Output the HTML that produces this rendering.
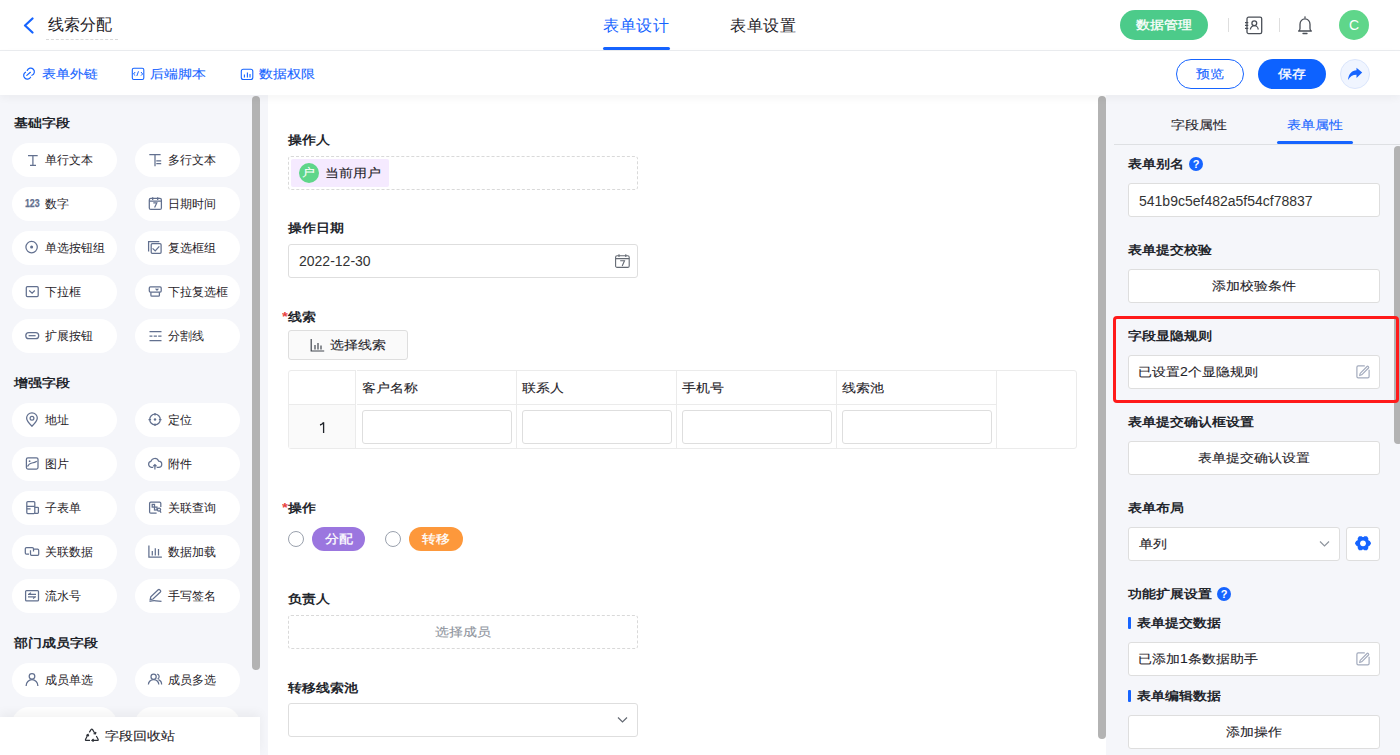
<!DOCTYPE html>
<html><head><meta charset="utf-8">
<style>
*{box-sizing:border-box;margin:0;padding:0}
html,body{width:1400px;height:755px;overflow:hidden;background:#fff;font-family:"Liberation Sans",sans-serif;color:#1f2329}
.a{position:absolute}
.t{position:absolute;white-space:nowrap;font-size:14px;line-height:14px;color:#1f2329}
.c{transform:scaleY(.86);-webkit-text-stroke:.12px}
.b{position:absolute;white-space:nowrap;font-size:14px;line-height:14px;font-weight:bold;color:#22252b;transform:scaleY(.86)}
.req{color:#e8413e;font-weight:bold;font-size:15px}
.sb{position:absolute;background:#b3b3b3;border-radius:4px}
.pill{position:absolute;width:105px;height:34px;border-radius:17px;background:#fff}
.pill svg{position:absolute;left:10px;top:5px}
.pill span{position:absolute;left:33px;top:11px;font-size:12px;line-height:12px;color:#1f2329;white-space:nowrap}
.box{position:absolute;background:#fff;border:1px solid #dedede;border-radius:3px}
.dash{position:absolute;border:1px dashed #d9d9d9;border-radius:3px}
.vl{position:absolute;width:1px;background:#ebebeb}
.hl{position:absolute;height:1px;background:#ebebeb}
.q{position:absolute;width:14px;height:14px;border-radius:50%;background:#1664ff;color:#fff;font-size:11px;line-height:14px;text-align:center;font-weight:bold}
</style></head><body>
<!-- header -->
<div class="a" style="left:0;top:0;width:1400px;height:50px;background:#fff"></div>
<div class="a" style="left:0;top:50px;width:1400px;height:1px;background:#ebedf0"></div>
<svg class="a" style="left:22px;top:17px" width="13" height="17" viewBox="0 0 13 17"><path d="M10.5 1.5 L3 8.5 L10.5 15.5" fill="none" stroke="#1664ff" stroke-width="2.2" stroke-linecap="round" stroke-linejoin="round"/></svg>
<div class="t" style="left:48px;top:17px;font-size:16px;line-height:16px">线索分配</div>
<div class="a" style="left:46px;top:39px;width:72px;height:0;border-top:1px dashed #d9d9d9"></div>
<div class="t" style="left:603px;top:18px;font-size:16px;line-height:16px;color:#1664ff;letter-spacing:.6px">表单设计</div>
<div class="a" style="left:603px;top:47px;width:67px;height:3px;background:#1664ff;border-radius:2px"></div>
<div class="t" style="left:730px;top:18px;font-size:16px;line-height:16px;letter-spacing:.6px">表单设置</div>
<div class="a" style="left:1120px;top:10px;width:88px;height:30px;border-radius:15px;background:#4ccb8a"></div>
<div class="t c" style="left:1136px;top:18px;color:#fff;-webkit-text-stroke:.35px #fff">数据管理</div>
<div class="a" style="left:1228px;top:18px;width:1px;height:14px;background:#dedede"></div>
<svg class="a" style="left:1244px;top:16px" width="19" height="19" viewBox="0 0 19 19"><rect x="3" y="1.2" width="14.7" height="16.4" rx="1.6" fill="none" stroke="#4a4f57" stroke-width="1.3"/><path d="M1 6.6h3.3M1 9.4h3.3M1 12.3h3.3" stroke="#4a4f57" stroke-width="1.2"/><circle cx="10.3" cy="7.2" r="2.4" fill="none" stroke="#4a4f57" stroke-width="1.3"/><path d="M6.4 13.6a3.9 3.9 0 0 1 7.8 0" fill="none" stroke="#4a4f57" stroke-width="1.3"/></svg>
<div class="a" style="left:1279px;top:18px;width:1px;height:14px;background:#dedede"></div>
<svg class="a" style="left:1297px;top:16px" width="17" height="19" viewBox="0 0 17 19"><path d="M8 0.8v1" stroke="#4a4f57" stroke-width="1.3" stroke-linecap="round"/><path d="M1.6 15Q3 14.2 3 12.5V8.2a5 5.4 0 0 1 10 0v4.3q0 1.7 1.4 2.5z" fill="none" stroke="#4a4f57" stroke-width="1.3" stroke-linejoin="round"/><path d="M6 17.5h4" stroke="#4a4f57" stroke-width="1.3" stroke-linecap="round"/></svg>
<div class="a" style="left:1339px;top:10px;width:30px;height:30px;border-radius:50%;background:#5fd68a"></div>
<div class="t" style="left:1339px;top:18px;width:30px;text-align:center;color:#fff;font-size:14px;line-height:14px">C</div>
<!-- toolbar -->
<div class="a" style="left:0;top:51px;width:1400px;height:44px;background:#fff;z-index:3;box-shadow:0 3px 8px rgba(0,0,0,0.045)">
<svg class="a" style="left:22px;top:16px" width="14" height="14" viewBox="0 0 14 14"><path d="M5.2 3.5A3.7 3.7 0 1 1 9.9 8.3M3.5 5.2A3.7 3.7 0 1 0 8.6 10.2M4.8 8.4L8.4 5.3" fill="none" stroke="#1664ff" stroke-width="1.2" stroke-linecap="round"/></svg>
<div class="t c" style="left:42px;top:16px;color:#1664ff">表单外链</div>
<svg class="a" style="left:131px;top:16px" width="14" height="14" viewBox="0 0 14 14"><rect x="1.3" y="1.2" width="11.5" height="11.3" rx="1.5" fill="none" stroke="#1664ff" stroke-width="1.1"/><path d="M4.2 5L2.5 7 4.2 8.6M10 5l1.6 2-1.6 1.6M7.5 4.3L5.8 9" fill="none" stroke="#1664ff" stroke-width="1"/></svg>
<div class="t c" style="left:150px;top:16px;color:#1664ff">后端脚本</div>
<svg class="a" style="left:240px;top:17px" width="14" height="13" viewBox="0 0 14 13"><rect x="1.3" y="1.2" width="11.5" height="10.3" rx="2" fill="none" stroke="#1664ff" stroke-width="1.1"/><path d="M4.4 6.5v3M7.4 4.5v5M10 6v3.5" stroke="#1664ff" stroke-width="1.1"/></svg>
<div class="t c" style="left:259px;top:16px;color:#1664ff">数据权限</div>
<div class="a" style="left:1176px;top:8px;width:68px;height:30px;border-radius:15px;border:1px solid #1664ff;background:#fff"></div>
<div class="t c" style="left:1196px;top:16px;color:#1664ff">预览</div>
<div class="a" style="left:1258px;top:8px;width:68px;height:30px;border-radius:15px;background:#0d62ff"></div>
<div class="t c" style="left:1278px;top:16px;color:#fff;-webkit-text-stroke:.35px #fff">保存</div>
<div class="a" style="left:1340px;top:8px;width:30px;height:30px;border-radius:50%;background:#f0f5ff;border:1px solid #dbe6fc"></div>
<svg class="a" style="left:1347px;top:16px" width="16" height="14" viewBox="0 0 16 14"><path d="M9.5 0.7L15.2 5.5 9.5 11V7.8C5.5 7.8 3 9.5 1 13.1 1.5 7 5 3.5 9.5 3.3z" fill="#1664ff"/></svg>
</div>
<!-- left panel -->
<div class="a" style="left:0;top:95px;width:268px;height:660px;background:#f5f6fa"></div>
<div class="b" style="left:14px;top:116px">基础字段</div>
<div class="pill" style="left:12px;top:143px"><svg width="20" height="24" viewBox="0 0 20 24"><path d="M6 7.5H15.7M10.9 7.5V17.4M8 17.4H14" fill="none" stroke="#62708f" stroke-width="1.25"/></svg><span>单行文本</span></div>
<div class="pill" style="left:135px;top:143px"><svg width="20" height="24" viewBox="0 0 20 24"><path d="M4.3 6.7H15.6M10 6.7V18.2M11.3 12.9H16.2M11.3 15.6H16.2" fill="none" stroke="#62708f" stroke-width="1.25"/></svg><span>多行文本</span></div>
<div class="pill" style="left:12px;top:187px"><svg width="20" height="24" viewBox="0 0 20 24"><text x="2.9" y="14.9" font-size="10.2" font-weight="bold" stroke="#62708f" stroke-width="0.25" font-family="Liberation Sans" fill="#62708f" textLength="14.7" lengthAdjust="spacingAndGlyphs">123</text></svg><span>数字</span></div>
<div class="pill" style="left:135px;top:187px"><svg width="20" height="24" viewBox="0 0 20 24"><rect x="4.3" y="6.4" width="12.1" height="11" rx="1.5" fill="none" stroke="#62708f" stroke-width="1.25"/><path d="M4.3 9.2H16.4M7.7 5.2V8M12.7 5.2V8M8.3 10.9H11.8L9.6 15.6" fill="none" stroke="#62708f" stroke-width="1.25"/></svg><span>日期时间</span></div>
<div class="pill" style="left:12px;top:231px"><svg width="20" height="24" viewBox="0 0 20 24"><circle cx="9.6" cy="11.1" r="5.7" fill="none" stroke="#62708f" stroke-width="1.25"/><circle cx="9.6" cy="11.1" r="1.5" fill="#62708f"/></svg><span>单选按钮组</span></div>
<div class="pill" style="left:135px;top:231px"><svg width="20" height="24" viewBox="0 0 20 24"><path d="M3.6 15.6V5.5H14.3" fill="none" stroke="#62708f" stroke-width="1.25"/><rect x="6.2" y="7.7" width="9.9" height="9.7" rx="1.1" fill="none" stroke="#62708f" stroke-width="1.25"/><path d="M7.6 12.4L10.2 14.9 14.3 10.3" fill="none" stroke="#62708f" stroke-width="1.25"/></svg><span>复选框组</span></div>
<div class="pill" style="left:12px;top:275px"><svg width="20" height="24" viewBox="0 0 20 24"><rect x="4.3" y="6.7" width="11.9" height="9.9" rx="1.1" fill="none" stroke="#62708f" stroke-width="1.25"/><path d="M7.2 10.5L10.1 13.1 12.8 10.5" fill="none" stroke="#62708f" stroke-width="1.25"/></svg><span>下拉框</span></div>
<div class="pill" style="left:135px;top:275px"><svg width="20" height="24" viewBox="0 0 20 24"><rect x="4.3" y="6.8" width="11.9" height="5.3" rx="1.1" fill="none" stroke="#62708f" stroke-width="1.25"/><path d="M5.9 12.2V15.3Q5.9 16.2 6.8 16.2H13.4Q14.4 16.2 14.4 15.3V12.2M10.6 8.6L12 10.1 13.4 8.6" fill="none" stroke="#62708f" stroke-width="1.25"/></svg><span>下拉复选框</span></div>
<div class="pill" style="left:12px;top:319px"><svg width="20" height="24" viewBox="0 0 20 24"><rect x="3.8" y="8.7" width="12.9" height="6" rx="3" fill="none" stroke="#62708f" stroke-width="1.25" stroke-width="1.35"/><path d="M6.6 11.7H13.6" fill="none" stroke="#62708f" stroke-width="1.25"/></svg><span>扩展按钮</span></div>
<div class="pill" style="left:135px;top:319px"><svg width="20" height="24" viewBox="0 0 20 24"><path d="M4.5 7.6H16.5M4.5 16.5H16.5M4.5 12.1H7.4M8.7 12.1H11.9M13.2 12.1H16.5" fill="none" stroke="#62708f" stroke-width="1.25" stroke-width="1.35"/></svg><span>分割线</span></div>
<div class="b" style="left:14px;top:376px">增强字段</div>
<div class="pill" style="left:12px;top:403px"><svg width="20" height="24" viewBox="0 0 20 24"><path d="M9.95 18.2C6.6 15.1 4.6 12.7 4.6 10.1A5.35 5.35 0 0 1 15.3 10.1C15.3 12.7 13.3 15.1 9.95 18.2Z" fill="none" stroke="#62708f" stroke-width="1.25"/><circle cx="10" cy="10.3" r="1.9" fill="none" stroke="#62708f" stroke-width="1.25"/></svg><span>地址</span></div>
<div class="pill" style="left:135px;top:403px"><svg width="20" height="24" viewBox="0 0 20 24"><circle cx="10" cy="11.5" r="5.3" fill="none" stroke="#62708f" stroke-width="1.25"/><path d="M10 5V7.6M10 15.4V18M3.5 11.5H6.1M13.9 11.5H16.5" fill="none" stroke="#62708f" stroke-width="1.25" stroke-width="1.4"/><circle cx="10" cy="11.5" r="1.2" fill="#62708f"/></svg><span>定位</span></div>
<div class="pill" style="left:12px;top:447px"><svg width="20" height="24" viewBox="0 0 20 24"><rect x="4.4" y="5.8" width="11.6" height="11.3" rx="1.5" fill="none" stroke="#62708f" stroke-width="1.25"/><path d="M5.5 14.6C6.6 12.1 7.6 11.3 10 11C12 10.8 13.5 10.2 14.8 9.2" fill="none" stroke="#62708f" stroke-width="1.25"/><circle cx="7.6" cy="9.2" r="0.9" fill="#62708f"/></svg><span>图片</span></div>
<div class="pill" style="left:135px;top:447px"><svg width="20" height="24" viewBox="0 0 20 24"><path d="M8.2 15.3H6.4A3 3 0 0 1 5.9 9.4 4.1 4.1 0 0 1 13.6 9 3.1 3.1 0 0 1 13.6 15.3H11.7M9.9 17.6V12.8M8.3 14.3L9.9 12.7 11.5 14.3" fill="none" stroke="#62708f" stroke-width="1.25"/></svg><span>附件</span></div>
<div class="pill" style="left:12px;top:491px"><svg width="20" height="24" viewBox="0 0 20 24"><rect x="4.8" y="5.6" width="8" height="12" rx="1" fill="none" stroke="#62708f" stroke-width="1.25"/><path d="M4.8 10.3H12.8M4.8 12.9H8.6M12.8 11.3H15.6Q16.4 11.3 16.4 12.1V16.5Q16.4 17.3 15.6 17.3H12.8" fill="none" stroke="#62708f" stroke-width="1.25"/></svg><span>子表单</span></div>
<div class="pill" style="left:135px;top:491px"><svg width="20" height="24" viewBox="0 0 20 24"><path d="M11.6 17.1H5.8Q4.6 17.1 4.6 15.9V7.2Q4.6 6.1 5.8 6.1H14.6Q15.8 6.1 15.8 7.2V11" fill="none" stroke="#62708f" stroke-width="1.25"/><rect x="7.2" y="8.4" width="2.3" height="2.7" fill="none" stroke="#62708f" stroke-width="1.25" stroke-width="1.1"/><rect x="9.5" y="11.1" width="2.5" height="2.9" fill="none" stroke="#62708f" stroke-width="1.25" stroke-width="1.1"/><circle cx="14" cy="13.6" r="1.6" fill="none" stroke="#62708f" stroke-width="1.25" stroke-width="1.1"/><path d="M15.1 14.9L16 16.8" fill="none" stroke="#62708f" stroke-width="1.25"/></svg><span>关联查询</span></div>
<div class="pill" style="left:12px;top:535px"><svg width="20" height="24" viewBox="0 0 20 24"><path d="M7 14.2H4.5Q3.3 14.2 3.3 13V8.8Q3.3 7.6 4.5 7.6H10.3Q11.5 7.6 11.5 8.8V11.4M8.5 10.2V14.3Q8.5 15.3 9.5 15.3H15.6Q16.7 15.3 16.7 14.2V10.3Q16.7 9.2 15.6 9.2H11.8" fill="none" stroke="#62708f" stroke-width="1.25"/></svg><span>关联数据</span></div>
<div class="pill" style="left:135px;top:535px"><svg width="20" height="24" viewBox="0 0 20 24"><path d="M3.9 5.6V17.2H16.9" fill="none" stroke="#62708f" stroke-width="1.25" stroke-width="1.4"/><path d="M7.3 11V15.6M10.3 8.2V15.6M13.5 9V15.6" fill="none" stroke="#62708f" stroke-width="1.25" stroke-width="1.5"/></svg><span>数据加载</span></div>
<div class="pill" style="left:12px;top:579px"><svg width="20" height="24" viewBox="0 0 20 24"><rect x="3.6" y="6.6" width="12.9" height="10.3" rx="1" fill="none" stroke="#62708f" stroke-width="1.25"/><path d="M6 10.3H14M8.9 8.6L7 10.3M6 12.9H14M11.2 14.6L13 12.9" fill="none" stroke="#62708f" stroke-width="1.25"/></svg><span>流水号</span></div>
<div class="pill" style="left:135px;top:579px"><svg width="20" height="24" viewBox="0 0 20 24"><path d="M5.2 15.6L5.8 12.8 13.2 5.8Q14 5.1 14.8 5.9L15.4 6.5Q16.1 7.3 15.4 8L8 15Z" fill="none" stroke="#62708f" stroke-width="1.25"/><path d="M4.5 17.4Q8 16.4 11 16.8T16.5 17.4" fill="none" stroke="#62708f" stroke-width="1.25"/></svg><span>手写签名</span></div>
<div class="b" style="left:14px;top:636px">部门成员字段</div>
<div class="pill" style="left:12px;top:663px"><svg width="20" height="24" viewBox="0 0 20 24"><circle cx="10" cy="8.3" r="2.8" fill="none" stroke="#62708f" stroke-width="1.25"/><path d="M4.1 18A5.9 6.3 0 0 1 15.9 18" fill="none" stroke="#62708f" stroke-width="1.25"/></svg><span>成员单选</span></div>
<div class="pill" style="left:135px;top:663px"><svg width="20" height="24" viewBox="0 0 20 24"><circle cx="8.6" cy="8.8" r="2.6" fill="none" stroke="#62708f" stroke-width="1.25"/><path d="M3.4 16.5A5.2 5 0 0 1 13.8 16.5M12.2 6.1A2.6 2.6 0 0 1 12.6 11M13.4 11.6A5 5 0 0 1 16.6 16.5" fill="none" stroke="#62708f" stroke-width="1.25"/></svg><span>成员多选</span></div>
<div class="pill" style="left:12px;top:707px"><span></span></div>
<div class="pill" style="left:135px;top:707px"><span></span></div>
<div class="sb" style="left:252px;top:96px;width:8px;height:574px"></div>
<div class="a" style="left:0;top:717px;width:260px;height:38px;background:#fff;box-shadow:0 -4px 10px rgba(0,0,0,0.05)"></div>
<svg class="a" style="left:80px;top:724px" width="24" height="24" viewBox="0 0 24 24"><path d="M9.3 8.4L11 5.6Q11.8 4.6 12.6 5.6L14.6 9" fill="none" stroke="#2b2f36" stroke-width="1.2"/><path d="M13.6 9.6L15.4 9.8 15.9 8" fill="none" stroke="#2b2f36" stroke-width="1.3"/><path d="M8 10.5L5.6 15.2Q5 16.4 6.4 16.4H10" fill="none" stroke="#2b2f36" stroke-width="1.2"/><path d="M6.4 11.6L8 10.5 8.7 12.3" fill="none" stroke="#2b2f36" stroke-width="1.3"/><path d="M16.3 12L18.1 15.3Q18.6 16.4 17.4 16.4H12" fill="none" stroke="#2b2f36" stroke-width="1.2"/><path d="M13.6 15L12 16.4 13.6 17.6" fill="none" stroke="#2b2f36" stroke-width="1.3"/></svg>
<div class="t c" style="left:105px;top:729px">字段回收站</div>
<!-- middle canvas -->
<div class="a" style="left:268px;top:95px;width:838px;height:660px;background:#fff"></div>
<div class="b" style="left:288px;top:133px">操作人</div>
<div class="dash" style="left:288px;top:156px;width:350px;height:34px"></div>
<div class="a" style="left:291px;top:159px;width:98px;height:28px;background:#f5eaff;border-radius:2px"></div>
<div class="a" style="left:299px;top:163px;width:20px;height:20px;border-radius:50%;background:#5fd68a"></div>
<div class="t c" style="left:302px;top:166px;font-size:13px;line-height:13px;color:#fff">户</div>
<div class="t c" style="left:325px;top:166px">当前用户</div>

<div class="b" style="left:288px;top:221px">操作日期</div>
<div class="box" style="left:288px;top:244px;width:350px;height:34px"></div>
<div class="t" style="left:299px;top:254px;color:#333">2022-12-30</div>
<svg class="a" style="left:615px;top:254px" width="15" height="14" viewBox="0 0 15 14"><rect x="0.6" y="1.8" width="13.6" height="11.6" rx="1.5" fill="none" stroke="#646a73" stroke-width="1.1"/><path d="M0.6 4.6h13.6M4 0.3v2.6M10.8 0.3v2.6" stroke="#646a73" stroke-width="1.1"/><path d="M5.2 6.8h4.3L7.2 12" fill="none" stroke="#646a73" stroke-width="1.1"/></svg>

<div class="b" style="left:282px;top:310px"><span class="req">*</span>线索</div>
<div class="a" style="left:288px;top:330px;width:120px;height:30px;background:#fafafa;border:1px solid #dedede;border-radius:3px"></div>
<svg class="a" style="left:310px;top:338px" width="15" height="14" viewBox="0 0 15 14"><path d="M1.2 1v12h13M5 7v4.5M8 5v6.5M11 7.5v4" fill="none" stroke="#41464f" stroke-width="1.2"/></svg>
<div class="t c" style="left:330px;top:338px">选择线索</div>

<div class="a" style="left:288px;top:370px;width:789px;height:79px;border:1px solid #ebebeb;border-radius:3px"></div>
<div class="a" style="left:356px;top:370px;width:1px;height:1px;background:#fff"></div>
<div class="a" style="left:289px;top:405px;width:66px;height:43px;background:#fafafa"></div>
<div class="vl" style="left:355px;top:371px;height:77px"></div>
<div class="hl" style="left:289px;top:404px;width:66px"></div>
<div class="hl" style="left:357px;top:404px;width:639px"></div>
<div class="vl" style="left:516px;top:371px;height:77px"></div>
<div class="vl" style="left:676px;top:371px;height:77px"></div>
<div class="vl" style="left:836px;top:371px;height:77px"></div>
<div class="vl" style="left:996px;top:371px;height:77px"></div>
<svg class="a" style="left:318px;top:421px" width="9" height="13" viewBox="0 0 9 13"><path d="M5.6 1.3V12M5.6 1.3C4.8 2.8 3.6 3.6 2 4" fill="none" stroke="#1f2329" stroke-width="1.3"/></svg>
<div class="t c" style="left:362px;top:381px">客户名称</div>
<div class="t c" style="left:522px;top:381px">联系人</div>
<div class="t c" style="left:682px;top:381px">手机号</div>
<div class="t c" style="left:842px;top:381px">线索池</div>
<div class="box" style="left:362px;top:410px;width:150px;height:34px"></div>
<div class="box" style="left:522px;top:410px;width:150px;height:34px"></div>
<div class="box" style="left:682px;top:410px;width:150px;height:34px"></div>
<div class="box" style="left:842px;top:410px;width:150px;height:34px"></div>

<div class="b" style="left:282px;top:501px"><span class="req">*</span>操作</div>
<div class="a" style="left:288px;top:531px;width:16px;height:16px;border-radius:50%;border:1px solid #9aa1ad;background:#fff"></div>
<div class="a" style="left:312px;top:527px;width:53px;height:24px;border-radius:12px;background:#9b76df"></div>
<div class="t c" style="left:325px;top:532px;color:#fff;-webkit-text-stroke:.3px #fff">分配</div>
<div class="a" style="left:385px;top:531px;width:16px;height:16px;border-radius:50%;border:1px solid #9aa1ad;background:#fff"></div>
<div class="a" style="left:409px;top:527px;width:54px;height:24px;border-radius:12px;background:#fd983b"></div>
<div class="t c" style="left:422px;top:532px;color:#fff;-webkit-text-stroke:.3px #fff">转移</div>

<div class="b" style="left:288px;top:592px">负责人</div>
<div class="dash" style="left:288px;top:615px;width:350px;height:34px"></div>
<div class="t c" style="left:435px;top:625px;color:#8f959e">选择成员</div>

<div class="b" style="left:288px;top:681px">转移线索池</div>
<div class="box" style="left:288px;top:703px;width:350px;height:34px"></div>
<svg class="a" style="left:617px;top:716px" width="11" height="8" viewBox="0 0 11 8"><path d="M1 1.5l4.5 4.5L10 1.5" fill="none" stroke="#646a73" stroke-width="1.2"/></svg>
<div class="sb" style="left:1098px;top:96px;width:8px;height:643px"></div>
<!-- right panel -->
<div class="a" style="left:1106px;top:95px;width:294px;height:660px;background:#f5f6fa;overflow:hidden">
<div class="sb" style="left:288px;top:51px;width:8px;height:298px"></div>
</div>
<div class="t c" style="left:1171px;top:118px">字段属性</div>
<div class="t c" style="left:1287px;top:118px;color:#1664ff">表单属性</div>
<div class="a" style="left:1114px;top:144px;width:286px;height:1px;background:#dee0e3"></div>
<div class="a" style="left:1277px;top:141px;width:76px;height:3px;background:#1664ff;border-radius:2px"></div>

<div class="b" style="left:1128px;top:157px">表单别名</div><div class="q" style="left:1189px;top:157px">?</div>
<div class="box" style="left:1128px;top:183px;width:252px;height:34px"></div>
<div class="t" style="left:1139px;top:194px;color:#333">541b9c5ef482a5f54cf78837</div>

<div class="b" style="left:1128px;top:243px">表单提交校验</div>
<div class="box" style="left:1128px;top:269px;width:252px;height:34px"></div>
<div class="t c" style="left:1128px;top:279px;width:252px;text-align:center">添加校验条件</div>

<div class="b" style="left:1128px;top:329px">字段显隐规则</div>
<div class="box" style="left:1128px;top:355px;width:252px;height:34px"></div>
<div class="t c" style="left:1138px;top:365px">已设置2个显隐规则</div>
<svg class="a" style="left:1352px;top:361px" width="22" height="22" viewBox="0 0 22 22"><path d="M12.8 4.9H6.2Q4.9 4.9 4.9 6.2V15.6Q4.9 16.9 6.2 16.9H15.8Q17.1 16.9 17.1 15.6V8.8" fill="none" stroke="#a3abbd" stroke-width="1.2"/><path d="M7.6 14.6L8.2 12.3 15 5.5Q15.6 4.9 16.2 5.5L16.5 5.8Q17.1 6.4 16.5 7L9.7 13.8Z" fill="none" stroke="#a3abbd" stroke-width="1.1" stroke-linejoin="round"/></svg>
<div class="a" style="left:1113px;top:316px;width:286px;height:87px;border:3px solid #ff1a1a;border-radius:4px"></div>

<div class="b" style="left:1128px;top:415px">表单提交确认框设置</div>
<div class="box" style="left:1128px;top:441px;width:252px;height:34px"></div>
<div class="t c" style="left:1128px;top:451px;width:252px;text-align:center">表单提交确认设置</div>

<div class="b" style="left:1128px;top:501px">表单布局</div>
<div class="box" style="left:1128px;top:527px;width:212px;height:34px"></div>
<div class="t c" style="left:1139px;top:537px">单列</div>
<svg class="a" style="left:1319px;top:540px" width="11" height="8" viewBox="0 0 11 8"><path d="M1 1.5l4.5 4.5L10 1.5" fill="none" stroke="#8f959e" stroke-width="1.2"/></svg>
<div class="box" style="left:1346px;top:527px;width:34px;height:34px"></div>
<svg class="a" style="left:1350px;top:532px" width="26" height="24" viewBox="0 0 26 24"><polygon points="20.00,11.30 16.50,17.36 9.50,17.36 6.00,11.30 9.50,5.24 16.50,5.24" fill="#1664ff" stroke="#1664ff" stroke-width="2" stroke-linejoin="round"/><circle cx="19.58" cy="15.10" r="1.3" fill="#fff"/><circle cx="13.00" cy="18.90" r="1.3" fill="#fff"/><circle cx="6.42" cy="15.10" r="1.3" fill="#fff"/><circle cx="6.42" cy="7.50" r="1.3" fill="#fff"/><circle cx="13.00" cy="3.70" r="1.3" fill="#fff"/><circle cx="19.58" cy="7.50" r="1.3" fill="#fff"/><circle cx="13" cy="11.3" r="2.9" fill="#fff"/></svg>

<div class="b" style="left:1128px;top:587px">功能扩展设置</div><div class="q" style="left:1217px;top:587px">?</div>
<div class="a" style="left:1128px;top:617px;width:3px;height:12px;background:#1664ff;border-radius:1px"></div>
<div class="b" style="left:1137px;top:616px">表单提交数据</div>
<div class="box" style="left:1128px;top:642px;width:252px;height:34px"></div>
<div class="t c" style="left:1138px;top:652px">已添加1条数据助手</div>
<svg class="a" style="left:1352px;top:648px" width="22" height="22" viewBox="0 0 22 22"><path d="M12.8 4.9H6.2Q4.9 4.9 4.9 6.2V15.6Q4.9 16.9 6.2 16.9H15.8Q17.1 16.9 17.1 15.6V8.8" fill="none" stroke="#a3abbd" stroke-width="1.2"/><path d="M7.6 14.6L8.2 12.3 15 5.5Q15.6 4.9 16.2 5.5L16.5 5.8Q17.1 6.4 16.5 7L9.7 13.8Z" fill="none" stroke="#a3abbd" stroke-width="1.1" stroke-linejoin="round"/></svg>
<div class="a" style="left:1128px;top:690px;width:3px;height:12px;background:#1664ff;border-radius:1px"></div>
<div class="b" style="left:1137px;top:689px">表单编辑数据</div>
<div class="box" style="left:1128px;top:715px;width:252px;height:34px"></div>
<div class="t c" style="left:1128px;top:725px;width:252px;text-align:center">添加操作</div>
</body></html>
